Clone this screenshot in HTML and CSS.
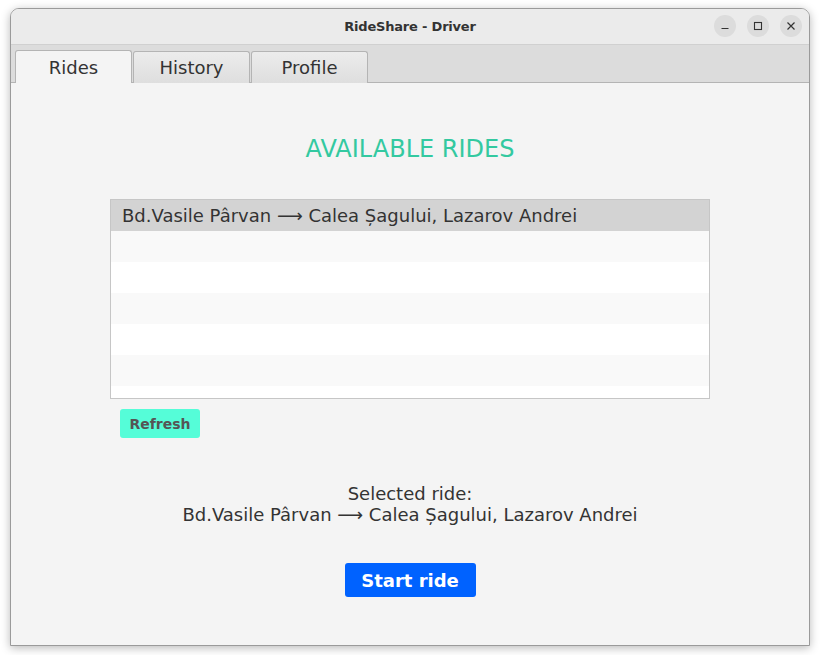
FILE: index.html
```html
<!DOCTYPE html>
<html>
<head>
<meta charset="utf-8">
<link rel="stylesheet" href="styles.css">
</head>
<body>
<div class="window">
  <div class="titlebar">
    <div class="title">RideShare - Driver</div>
    <div class="controls">
      <span class="ctl"><svg width="10" height="10" viewBox="0 0 10 10"><path d="M1.5 7.5h7" stroke="#333" stroke-width="1.2"/></svg></span>
      <span class="ctl"><svg width="10" height="10" viewBox="0 0 10 10"><rect x="1.5" y="1.5" width="7" height="7" fill="none" stroke="#333" stroke-width="1.1"/></svg></span>
      <span class="ctl"><svg width="10" height="10" viewBox="0 0 10 10"><path d="M1.5 1.5l7 7M8.5 1.5l-7 7" stroke="#333" stroke-width="1.2"/></svg></span>
    </div>
  </div>
  <div class="tabbar">
    <div class="tab active">Rides</div>
    <div class="tab">History</div>
    <div class="tab">Profile</div>
  </div>
  <div class="content">
    <h1 class="heading">AVAILABLE RIDES</h1>
    <div class="list">
      <div class="row selected">Bd.Vasile Pârvan ⟶ Calea Șagului, Lazarov Andrei</div>
      <div class="row odd"></div>
      <div class="row"></div>
      <div class="row odd"></div>
      <div class="row"></div>
      <div class="row odd"></div>
      <div class="row"></div>
    </div>
    <div class="refresh-wrap"><button class="refresh">Refresh</button></div>
    <div class="selected-info">Selected ride:<br>Bd.Vasile Pârvan ⟶ Calea Șagului, Lazarov Andrei</div>
    <button class="start">Start ride</button>
  </div>
</div>
</body>
</html>
```
FILE: styles.css
```css
html, body { margin: 0; padding: 0; }
body {
  background: #ffffff;
  width: 820px;
  height: 655px;
  overflow: hidden;
  padding: 8px 0 0 10px;
  box-sizing: border-box;
  font-family: "DejaVu Sans", sans-serif;
}
.window {
  width: 800px;
  height: 638px;
  border: 1px solid #9a9a9a;
  box-sizing: border-box;
  border-radius: 9px 9px 0 0;
  background: #f4f4f4;
  box-shadow: 0 2px 10px rgba(0,0,0,0.28);
  overflow: hidden;
  display: flex;
  flex-direction: column;
}
.titlebar {
  height: 35px;
  flex: none;
  background: #ebebeb;
  border-bottom: 1px solid #d0d0d0;
  position: relative;
  display: flex;
  align-items: center;
  justify-content: center;
}
.title {
  font-family: "DejaVu Sans", sans-serif;
  font-weight: bold;
  font-size: 13px;
  color: #333;
  letter-spacing: -0.2px;
}
.controls {
  position: absolute;
  right: 7px;
  top: 6px;
  display: flex;
  gap: 11px;
}
.ctl {
  width: 22px;
  height: 22px;
  border-radius: 50%;
  background: #dcdcdc;
  display: flex;
  align-items: center;
  justify-content: center;
}
.tabbar {
  height: 37px;
  flex: none;
  background: #dcdcdc;
  border-bottom: 1px solid #b4b4b4;
  display: flex;
  align-items: flex-end;
  padding-left: 4px;
  gap: 1px;
}
.tab {
  width: 117px;
  height: 32px;
  box-sizing: border-box;
  border: 1px solid #b4b4b4;
  border-bottom: none;
  border-radius: 3px 3px 0 0;
  background: linear-gradient(#ececec, #dedede);
  font-family: "DejaVu Sans", sans-serif;
  font-size: 18px;
  color: #333;
  display: flex;
  align-items: center;
  justify-content: center;
  margin-bottom: -1px;
}
.tab.active {
  background: #f4f4f4;
  height: 33px;
  padding-top: 1px;
}
.content {
  flex: 1;
  display: flex;
  flex-direction: column;
  align-items: center;
}
.heading {
  margin: 52px 0 0;
  font-weight: normal;
  font-size: 24px;
  color: #33c9a0;
  line-height: 28px;
}
.list {
  margin-top: 36px;
  width: 600px;
  height: 200px;
  border: 1px solid #c6c6c6;
  box-sizing: border-box;
  background: #fff;
  overflow: hidden;
}
.row {
  height: 31px;
  background: #fff;
  font-size: 18px;
  color: #333;
  line-height: 31px;
  padding-left: 11px;
  white-space: nowrap;
}
.row.odd { background: #f9f9f9; }
.row.selected { background: #d3d3d3; }
.refresh-wrap {
  width: 600px;
  margin-top: 10px;
  padding-left: 10px;
  box-sizing: border-box;
}
.refresh {
  background: #55fdd8;
  border: none;
  border-radius: 3px;
  width: 80px;
  height: 29px;
  font-family: "DejaVu Sans", sans-serif;
  font-weight: bold;
  font-size: 14px;
  color: #555;
  padding: 0;
}
.selected-info {
  margin-top: 45px;
  text-align: center;
  font-size: 18px;
  line-height: 21px;
  color: #333;
}
.start {
  margin-top: 38px;
  width: 131px;
  height: 34px;
  border: none;
  border-radius: 3px;
  background: #0062ff;
  color: #fff;
  font-family: "DejaVu Sans", sans-serif;
  font-weight: bold;
  font-size: 18px;
  padding: 0;
}
```
